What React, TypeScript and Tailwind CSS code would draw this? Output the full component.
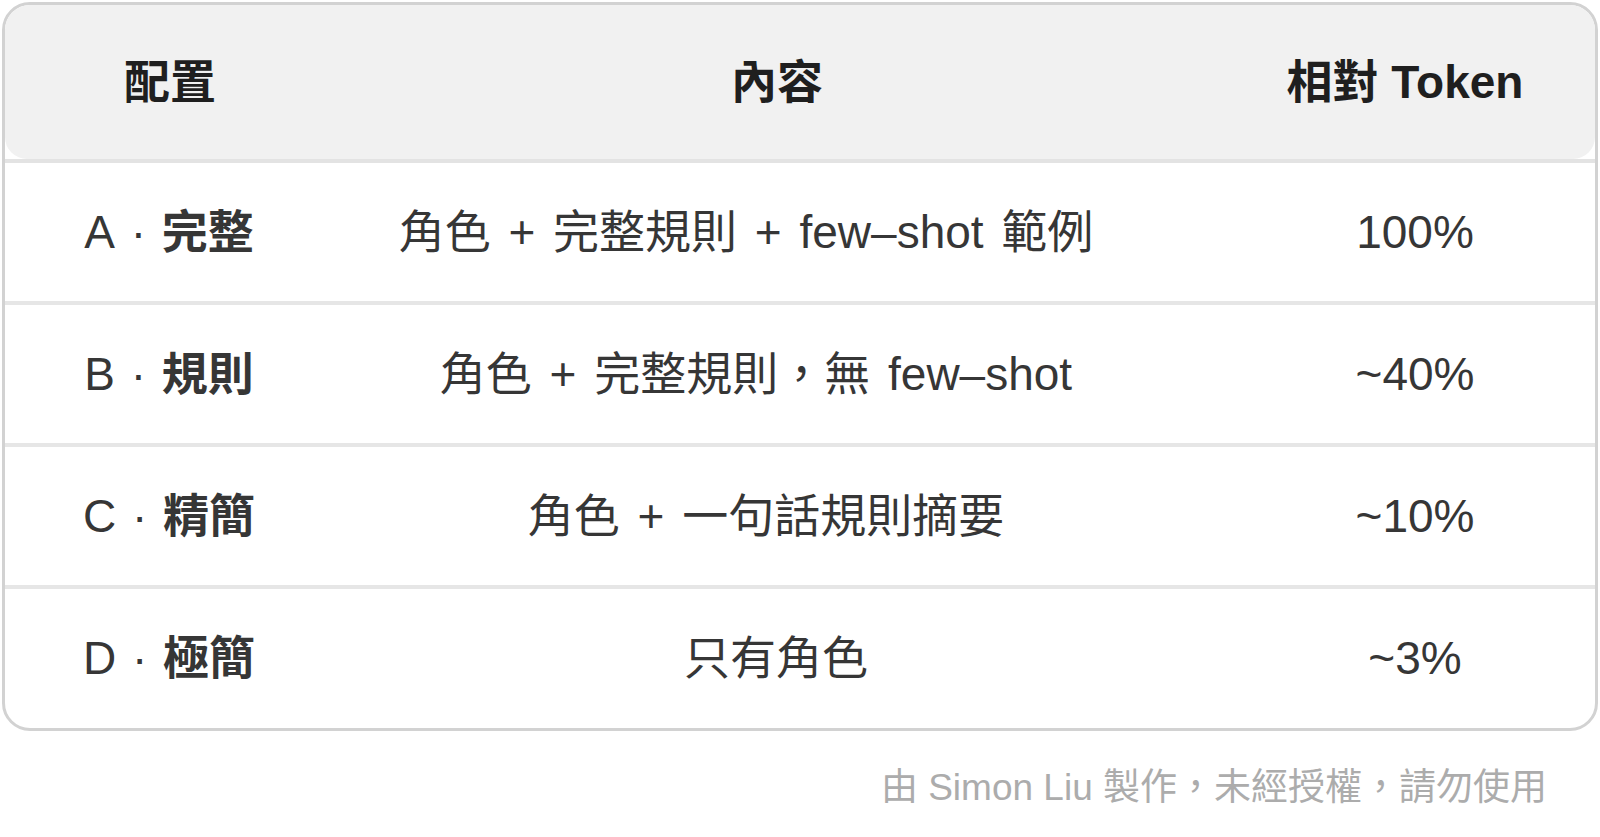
import React from "react";

const rows = [
  { label: "A", name: "完整", content: "角色 + 完整規則 + few–shot 範例", tokens: "100%", shift: "pr-[68px]" },
  { label: "B", name: "規則", content: "角色 + 完整規則，無 few–shot", tokens: "~40%", shift: "pr-[48px]" },
  { label: "C", name: "精簡", content: "角色 + 一句話規則摘要", tokens: "~10%", shift: "pr-[28px]" },
  { label: "D", name: "極簡", content: "只有角色", tokens: "~3%", shift: "pr-[8px]" },
];

const font = { fontFamily: '"Liberation Sans", "Noto Sans CJK TC", sans-serif' };

export default function App() {
  return (
    <div className="w-[1600px] h-[837px] bg-white pt-[2px] px-[2px]" style={font}>
      <div className="border-[3px] border-[#d2d2d2] rounded-[28px] overflow-hidden bg-white">
        <div className="h-[154px] rounded-[22px] bg-[#f1f1f1] grid grid-cols-[330px_890px_1fr] items-center text-[46px] font-bold text-[#1f1f1f]">
          <div className="text-center">配置</div>
          <div className="text-center pr-[6px]">內容</div>
          <div className="text-center pr-[10px]">相對 Token</div>
        </div>
        <div className="h-[4px] bg-[#e3e3e3]" />
        {rows.map((r, i) => (
          <div key={r.label}>
            <div
              className={`${i === 3 ? "h-[139px]" : "h-[138px]"} grid grid-cols-[330px_890px_1fr] items-center text-[46px] text-[#363636]`}
            >
              <div className="text-center pr-[2px] whitespace-pre">
                <span>{r.label}</span>
                <span className="[word-spacing:3px]"> · </span>
                <span className="font-bold">{r.name}</span>
              </div>
              <div className={`text-center ${r.shift} [word-spacing:5px]`}>{r.content}</div>
              <div className="text-center pl-[10px]">{r.tokens}</div>
            </div>
            {i < 3 && <div className="h-[4px] bg-[#e6e6e6]" />}
          </div>
        ))}
      </div>
      <div className="flex justify-end pr-[51px] pt-[38px] text-[37px] text-[#acacac] leading-none">
        由 Simon Liu 製作，未經授權，請勿使用
      </div>
    </div>
  );
}
